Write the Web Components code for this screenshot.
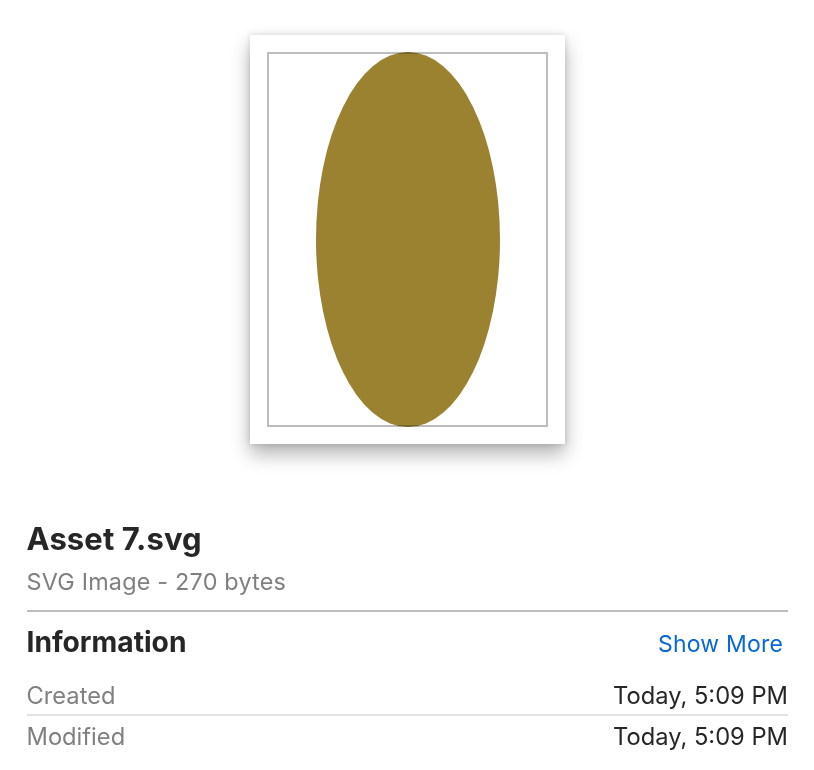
<!DOCTYPE html>
<html><head><meta charset="utf-8"><style>
html,body{margin:0;padding:0;background:#fff}
body{width:814px;height:770px;overflow:hidden;font-family:Inter,"Liberation Sans",sans-serif}
</style></head><body>
<file-inspector>
<doc-preview></doc-preview>
<file-title name="Asset 7.svg" kind="SVG Image - 270 bytes"></file-title>
<info-section heading="Information" action="Show More">
<info-row label="Created" value="Today, 5:09 PM"></info-row>
<info-row label="Modified" value="Today, 5:09 PM" divider></info-row>
</info-section>
</file-inspector>
<script>
function def(name,html,init){customElements.define(name,class extends HTMLElement{connectedCallback(){if(this.shadowRoot)return;const r=this.attachShadow({mode:'open'});r.innerHTML=html;if(init)init(this,r);}});}
def('file-inspector',`<style>:host{display:flex;flex-direction:column;width:814px;height:770px;box-sizing:border-box;padding-top:35px}</style><slot></slot>`);
def('doc-preview',`<style>
:host{display:flex;justify-content:center;padding-left:1px;margin-bottom:77px}
.paper{width:315px;height:409px;box-sizing:border-box;padding:17px;background:#fff;box-shadow:0 10px 18px rgba(0,0,0,.3),0 0 6px rgba(0,0,0,.14)}
.frame{box-sizing:border-box;width:281px;height:375px;border:2px solid #bdbdbd;display:flex;justify-content:center;overflow:visible}
svg{display:block;flex:none;margin:-2px 0 0 1px;mix-blend-mode:multiply}
</style><div class="paper"><div class="frame"><svg width="184" height="375" viewBox="0 0 184 375"><ellipse cx="92" cy="187.5" rx="92" ry="187.5" fill="#9a8230"/></svg></div></div>`);
def('file-title',`<style>
:host{display:block;padding:0 26px 0 26.5px;color:#262626}
.n{font-size:31px;font-weight:650;line-height:35px;letter-spacing:.1px}
.k{font-size:23.4px;line-height:27px;color:#808080;margin-top:12px;letter-spacing:.2px}
.rule{height:2px;background:#bdbdbd;margin-top:15px}
</style><div class="n"></div><div class="k"></div><div class="rule"></div>`,(h,r)=>{r.querySelector('.n').textContent=h.getAttribute('name');r.querySelector('.k').textContent=h.getAttribute('kind');});
def('info-section',`<style>
:host{display:block;padding:0 26px 0 26.5px}
.head{display:flex;justify-content:space-between;align-items:center;height:60px}
.t{font-size:28.2px;font-weight:650;color:#262626}
.a{font-size:23px;color:#0a68d6;margin-right:5px;margin-top:3px;letter-spacing:.2px}
.rows{margin-top:3px}
</style><div class="head"><span class="t"></span><span class="a"></span></div><div class="rows"><slot></slot></div>`,(h,r)=>{r.querySelector('.t').textContent=h.getAttribute('heading');r.querySelector('.a').textContent=h.getAttribute('action');});
def('info-row',`<style>
:host{display:flex;justify-content:space-between;align-items:center;height:37px;padding-top:2px;font-size:23.7px}
:host([divider]){border-top:2px solid #e3e3e3}
.l{color:#808080}.v{color:#262626}
</style><span class="l"></span><span class="v"></span>`,(h,r)=>{r.querySelector('.l').textContent=h.getAttribute('label');r.querySelector('.v').textContent=h.getAttribute('value');});
</script>
</body></html>
